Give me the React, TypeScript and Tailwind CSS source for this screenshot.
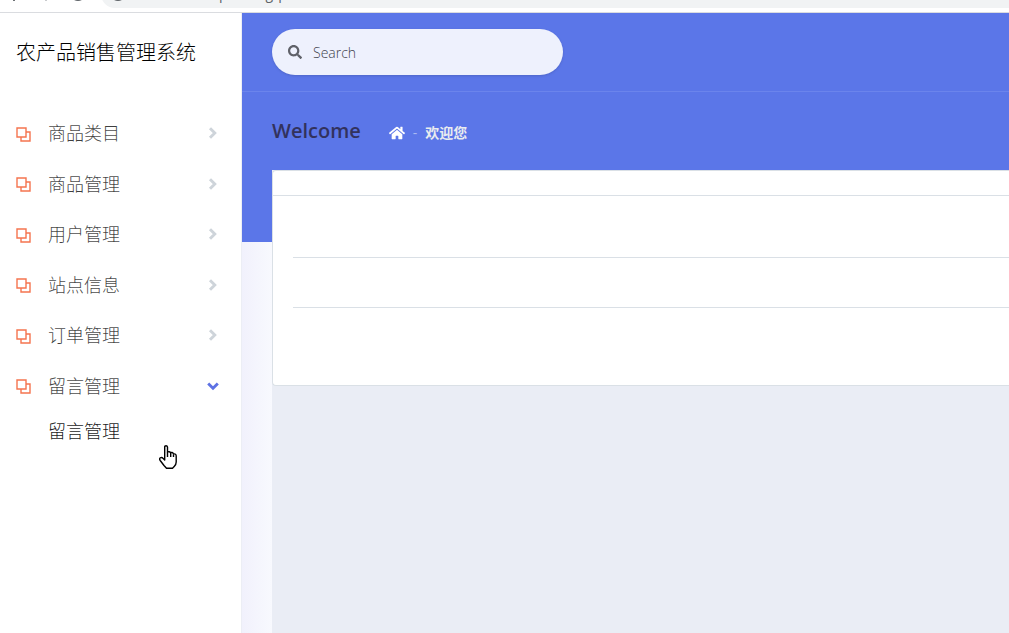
import { FaHome, FaSearch } from "react-icons/fa";

const menu = ["商品类目", "商品管理", "用户管理", "站点信息", "订单管理", "留言管理"];

function UngroupIcon() {
  return (
    <svg viewBox="0 0 15 15" className="mt-0.5 h-[15px] w-[15px] shrink-0" fill="none" stroke="#f5744f" strokeWidth="1.4" aria-hidden="true">
      <path d="M1 1h9v9H1z" />
      <path d="M10 5h4v9H5v-4" />
    </svg>
  );
}

function Chevron({ open }: { open: boolean }) {
  return (
    <svg viewBox="0 0 12 12" className={open ? "h-3 w-3 text-[#5e72e4]" : "h-3 w-3 text-[#ced4da]"} fill="none" stroke="currentColor" strokeWidth="2.9" aria-hidden="true">
      <path d={open ? "M1.2 3.5 6 8.2 10.8 3.5" : "M3 1.2 7.8 6 3 10.8"} />
    </svg>
  );
}

function BrowserEdge() {
  return (
    <div className="flex h-[13px] shrink-0 items-end overflow-hidden border-b border-[#dadce0] bg-white" aria-hidden="true">
      <svg viewBox="0 0 101 12" className="h-3 w-[101px] shrink-0" fill="none" stroke="#5f6368">
        <path d="M13 0l1 .8 1-.8" />
        <path d="M45 0l1 .8 1-.8" stroke="#c4c6c9" />
        <path d="M74 -1Q78 1.6 82 -1" strokeWidth="1.6" />
      </svg>
      <div className="mb-1 flex h-7 flex-1 items-center rounded-l-full bg-[#f1f3f4]">
        <svg viewBox="0 0 10 28" className="ml-3 h-7 w-[10px]" fill="none" stroke="#5f6368" strokeWidth="1.6">
          <path d="M1 19Q5 21.6 9 19" />
        </svg>
        <div className="ml-[96px] flex gap-[38px] text-sm leading-7 text-[#5f6368]">
          <span>p</span>
          <span className="flex gap-[5px]"><span>g</span><span>p</span></span>
        </div>
      </div>
    </div>
  );
}

function HandCursor() {
  return (
    <svg viewBox="0 0 18 24" className="absolute top-[445px] left-[159px] h-6 w-[18px]" fill="#fff" stroke="#000" strokeWidth="1.4" strokeLinejoin="round" aria-hidden="true">
      <path d="M5.7 14V2Q5.7.8 7 .8T8.5 2V7.5Q9 6.5 10.2 6.7T11.7 8Q12 7.2 13.1 7.5T14.5 9Q17.2 8.4 17.2 11V17Q17.2 19.5 15.2 21.5L13.5 23.2H7.5L5 20.5 1.2 15.5Q0 13.8 1.4 12.8T4 13.3L5.7 15z" />
      <path d="M8.5 7.5v4.5M11.7 8v4M14.5 9.5v2.5" />
    </svg>
  );
}

export default function App() {
  return (
    <div className="flex h-screen flex-col overflow-hidden bg-white font-['Open_Sans','Noto_Sans_CJK_SC',sans-serif]">
      <BrowserEdge />
      <div className="flex min-h-0 flex-1">
        <aside className="w-[242px] shrink-0 border-r border-[#eceef5] bg-white">
          <h1 className="flex h-20 items-center px-4 text-xl font-light text-black">农产品销售管理系统</h1>
          <nav className="pt-[15px]">
            <ul className="grid h-[303px] auto-rows-fr">
              {menu.map((label, i) => (
                <li key={label} className="grid">
                  <button type="button" className="flex items-center pr-[22px] pl-4 text-left text-lg font-light text-black/75">
                    <UngroupIcon />
                    <span className="ml-[17px] flex-1">{label}</span>
                    <Chevron open={i === menu.length - 1} />
                  </button>
                </li>
              ))}
            </ul>
            <a href="#messages" className="flex h-10 items-center pl-12 text-lg font-light text-black/90">留言管理</a>
          </nav>
        </aside>
        <main className="flex min-w-0 flex-1 flex-col bg-[linear-gradient(90deg,#f1f1fc,#f8f9fe_30px)]">
          <div className="flex flex-1 flex-col bg-[linear-gradient(#5b76e8,#5b76e8)] bg-[length:100%_229px] bg-no-repeat">
            <header className="border-b border-[#6b84ec] py-4 pl-[30px]">
              <label className="flex h-[46px] w-[291px] items-center rounded-full bg-[#eef1fd] px-4 shadow-sm">
                <FaSearch className="h-3.5 w-3.5 text-[#5f6169]" />
                <input type="text" placeholder="Search" aria-label="Search" className="ml-[11px] min-w-0 flex-1 bg-transparent pt-0.5 text-sm font-light outline-none placeholder:text-[#40424c]" />
              </label>
            </header>
            <div className="flex h-[78px] items-center pl-[30px]">
              <h2 className="text-xl font-semibold text-[#32325d]">Welcome</h2>
              <nav className="ml-7 flex items-center gap-2 pt-1 text-sm font-semibold text-[#e9ecef]">
                <a href="#home" aria-label="Home"><FaHome className="h-4 w-4 text-white" /></a>
                <span className="font-normal text-[#aab8f2]">-</span>
                <span>欢迎您</span>
              </nav>
            </div>
            <div className="ml-[30px] flex-1 bg-[#eaedf5]">
              <section className="h-[216px] rounded-l border border-r-0 border-[#dae0e6] bg-white">
                <div className="h-[25px] border-b border-[#dae0e6]" />
                <div className="ml-5 h-[62px] border-b border-[#dae0e6]" />
                <div className="ml-5 h-[50px] border-b border-[#dae0e6]" />
              </section>
            </div>
          </div>
        </main>
      </div>
      <HandCursor />
    </div>
  );
}
